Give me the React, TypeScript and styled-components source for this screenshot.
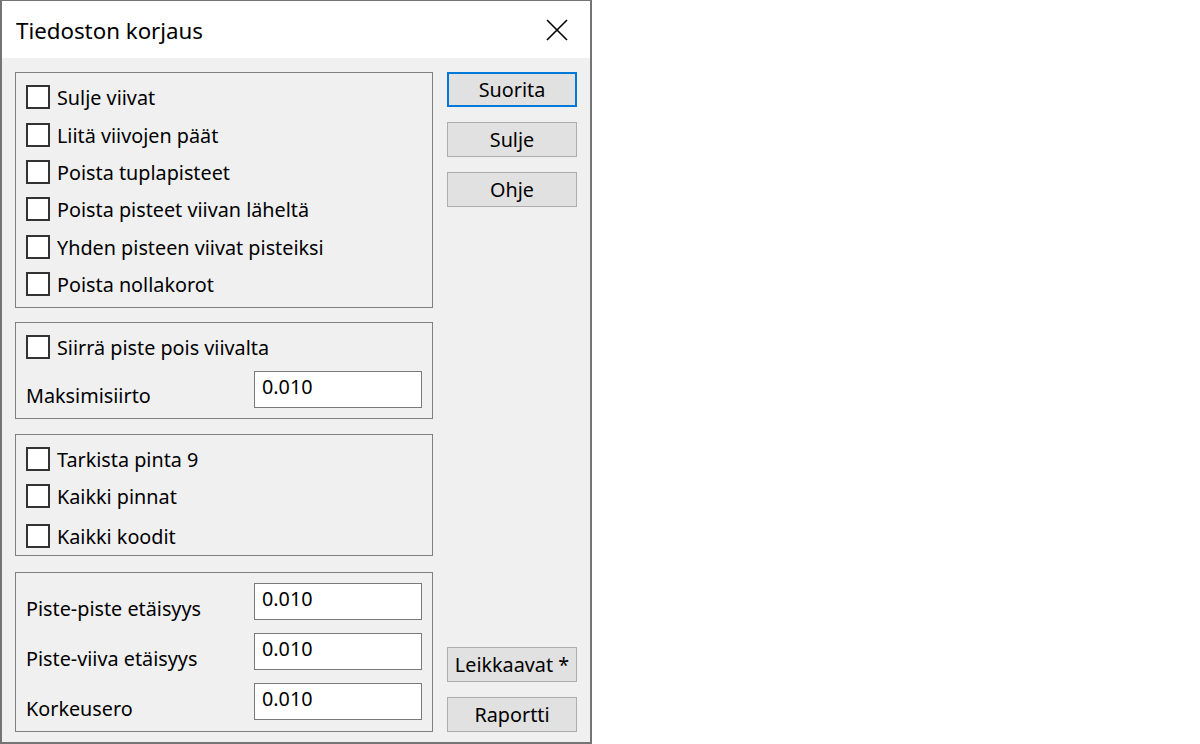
import styled, { createGlobalStyle } from "styled-components";

const GlobalStyle = createGlobalStyle`
  html, body {
    margin: 0;
    padding: 0;
    background: #ffffff;
  }
  body {
    font-family: "Noto Sans", "Open Sans", sans-serif;
    color: #000000;
  }
`;

const Window = styled.div`
  width: 592px;
  height: 744px;
  box-sizing: border-box;
  border: 2px solid #747474;
  border-top-width: 1px;
  background: #f0f0f0;
  display: flex;
  flex-direction: column;
`;

const TitleBar = styled.div`
  height: 57px;
  background: #ffffff;
  display: flex;
  align-items: center;
  justify-content: space-between;
  padding: 0 22px 0 14px;
`;

const Title = styled.div`
  font-size: 22.3px;
  line-height: 30px;
  margin-top: 2px;
`;

const Body = styled.div`
  flex: 1;
  display: flex;
  gap: 14px;
  padding: 14px 0 10px 13px;
`;

const LeftColumn = styled.div`
  width: 418px;
  display: flex;
  flex-direction: column;
`;

const Group = styled.div<{ $height: number; $gap?: number; $pad?: string }>`
  height: ${({ $height }) => $height}px;
  box-sizing: border-box;
  border: 1px solid #7f7f7f;
  margin-bottom: ${({ $gap }) => $gap ?? 15}px;
  padding: ${({ $pad }) => $pad ?? "6px 10px 0 10px"};
  display: flex;
  flex-direction: column;
`;

const CheckRow = styled.label<{ $height?: number }>`
  display: flex;
  align-items: center;
  gap: 7px;
  height: ${({ $height }) => $height ?? 37.4}px;
  font-size: 19.8px;
  flex-shrink: 0;
`;

const Box = styled.span`
  width: 24px;
  height: 24px;
  box-sizing: border-box;
  border: 2px solid #333333;
  background: #ffffff;
  flex-shrink: 0;
  margin-top: -1px;
`;

const FieldRow = styled.div<{ $height: number }>`
  display: flex;
  justify-content: space-between;
  align-items: flex-start;
  height: ${({ $height }) => $height}px;
  flex-shrink: 0;
`;

const FieldLabel = styled.span<{ $top: number }>`
  font-size: 19.8px;
  line-height: 26px;
  margin-top: ${({ $top }) => $top}px;
`;

const Input = styled.div<{ $top: number }>`
  width: 168px;
  height: 37px;
  box-sizing: border-box;
  border: 1px solid #7a7a7a;
  background: #ffffff;
  font-size: 19.8px;
  line-height: 26px;
  padding: 2px 0 0 7px;
  margin-top: ${({ $top }) => $top}px;
`;

const RightColumn = styled.div`
  width: 130px;
  display: flex;
  flex-direction: column;
  gap: 15px;
`;

const Spacer = styled.div`
  flex: 1;
`;

const Button = styled.div<{ $primary?: boolean }>`
  height: 35px;
  box-sizing: border-box;
  background: #e1e1e1;
  border: ${({ $primary }) => ($primary ? "2px solid #0078d7" : "1px solid #adadad")};
  display: flex;
  align-items: center;
  justify-content: center;
  font-size: 19.8px;
  padding-bottom: 1px;
`;

const Check = ({ text, height }: { text: string; height?: number }) => (
  <CheckRow $height={height}>
    <Box />
    <span>{text}</span>
  </CheckRow>
);

interface FieldProps {
  label: string;
  value: string;
  height: number;
  inputTop: number;
  labelTop: number;
}

const Field = ({ label, value, height, inputTop, labelTop }: FieldProps) => (
  <FieldRow $height={height}>
    <FieldLabel $top={labelTop}>{label}</FieldLabel>
    <Input $top={inputTop}>{value}</Input>
  </FieldRow>
);

const CloseIcon = () => (
  <svg width="22" height="22" viewBox="0 0 22 22">
    <path d="M1 1 L21 21 M21 1 L1 21" stroke="#000" strokeWidth="1.6" fill="none" />
  </svg>
);

export default function App() {
  return (
    <>
      <GlobalStyle />
      <Window>
        <TitleBar>
          <Title>Tiedoston korjaus</Title>
          <CloseIcon />
        </TitleBar>
        <Body>
          <LeftColumn>
            <Group $height={236} $gap={14}>
              <Check text="Sulje viivat" />
              <Check text="Liitä viivojen päät" />
              <Check text="Poista tuplapisteet" />
              <Check text="Poista pisteet viivan läheltä" />
              <Check text="Yhden pisteen viivat pisteiksi" />
              <Check text="Poista nollakorot" />
            </Group>
            <Group $height={97}>
              <Check text="Siirrä piste pois viivalta" />
              <Field label="Maksimisiirto" value="0.010" height={48} inputTop={5} labelTop={17} />
            </Group>
            <Group $height={122} $gap={16}>
              <Check text="Tarkista pinta 9" />
              <Check text="Kaikki pinnat" height={37} />
              <Check text="Kaikki koodit" height={43} />
            </Group>
            <Group $height={160} $gap={0} $pad="0 10px 0 10px">
              <Field label="Piste-piste etäisyys" value="0.010" height={50} inputTop={10} labelTop={23} />
              <Field label="Piste-viiva etäisyys" value="0.010" height={50} inputTop={10} labelTop={23} />
              <Field label="Korkeusero" value="0.010" height={50} inputTop={10} labelTop={23} />
            </Group>
          </LeftColumn>
          <RightColumn>
            <Button $primary>Suorita</Button>
            <Button>Sulje</Button>
            <Button>Ohje</Button>
            <Spacer />
            <Button>Leikkaavat *</Button>
            <Button>Raportti</Button>
          </RightColumn>
        </Body>
      </Window>
    </>
  );
}
